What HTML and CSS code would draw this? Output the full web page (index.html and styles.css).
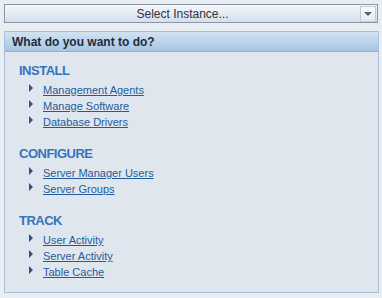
FILE: index.html
```html
<!DOCTYPE html>
<html lang="en">
<head>
  <meta charset="UTF-8" />
  <title>Server Manager</title>
  <link rel="stylesheet" href="styles.css">
</head>
<body>

  <div class="instance-select">
    <span class="select-label">Select Instance...</span>
    <span class="select-btn"><span class="select-arrow"></span></span>
  </div>

  <div class="panel">
    <div class="panel-head">What do you want to do?</div>
    <div class="panel-body">

      <div class="group">
        <h3>INSTALL</h3>
        <ul>
          <li><a href="#">Management Agents</a></li>
          <li><a href="#">Manage Software</a></li>
          <li><a href="#">Database Drivers</a></li>
        </ul>
      </div>

      <div class="group">
        <h3>CONFIGURE</h3>
        <ul>
          <li><a href="#">Server Manager Users</a></li>
          <li><a href="#">Server Groups</a></li>
        </ul>
      </div>

      <div class="group">
        <h3>TRACK</h3>
        <ul>
          <li><a href="#">User Activity</a></li>
          <li><a href="#">Server Activity</a></li>
          <li><a href="#">Table Cache</a></li>
        </ul>
      </div>

    </div>
  </div>

</body>
</html>
```

FILE: styles.css
```css
* {
  box-sizing: border-box;
}

body {
  margin: 0;
  padding: 4px 4px 0 4px;
  background: #e9eef3;
  font-family: 'Liberation Sans', Arial, sans-serif;
  font-size: 11px;
}

.instance-select {
  height: 19px;
  width: 374px;
  border: 1px solid #8c95a5;
  background: linear-gradient(to bottom, #f4f7fb, #d4e0ee);
  display: flex;
  align-items: center;
}

.select-label {
  flex: 1;
  text-align: center;
  color: #333;
  font-size: 12px;
}

.select-btn {
  width: 16px;
  height: 16px;
  margin-right: 1px;
  border: 1px solid #c4ccd6;
  background: linear-gradient(to bottom, #fbfcfd, #e2e9f0);
  display: flex;
  align-items: center;
  justify-content: center;
}

.select-arrow {
  width: 0;
  height: 0;
  border-left: 4px solid transparent;
  border-right: 4px solid transparent;
  border-top: 4px solid #55606e;
}

.panel {
  margin-top: 8px;
  width: 375px;
  height: 262px;
  border: 1px solid #a7bfdb;
  background: #dfe6ee;
}

.panel-head {
  height: 20px;
  padding: 3px 0 0 7px;
  background: linear-gradient(to bottom, #d3e2f1, #a7c5e4);
  border-bottom: 1px solid #8db0d6;
  color: #1d2b3c;
  font-weight: bold;
  font-size: 12px;
}

.panel-body {
  padding: 11px 0 0 14px;
}

.group {
  margin-bottom: 14px;
}

.group h3 {
  margin: 0 0 6px 0;
  font-size: 13px;
  font-weight: bold;
  color: #3574bd;
  letter-spacing: -0.5px;
}

.group ul {
  list-style: none;
  margin: 0;
  padding: 0 0 0 10px;
}

.group li {
  height: 16px;
  display: flex;
  align-items: flex-start;
}

.group li::before {
  content: "";
  width: 0;
  height: 0;
  margin-right: 10px;
  border-top: 4px solid transparent;
  border-bottom: 4px solid transparent;
  border-left: 4px solid #3a4e86;
}

.group a {
  color: #1f5c9c;
  text-decoration: underline;
  font-size: 11px;
}
```
